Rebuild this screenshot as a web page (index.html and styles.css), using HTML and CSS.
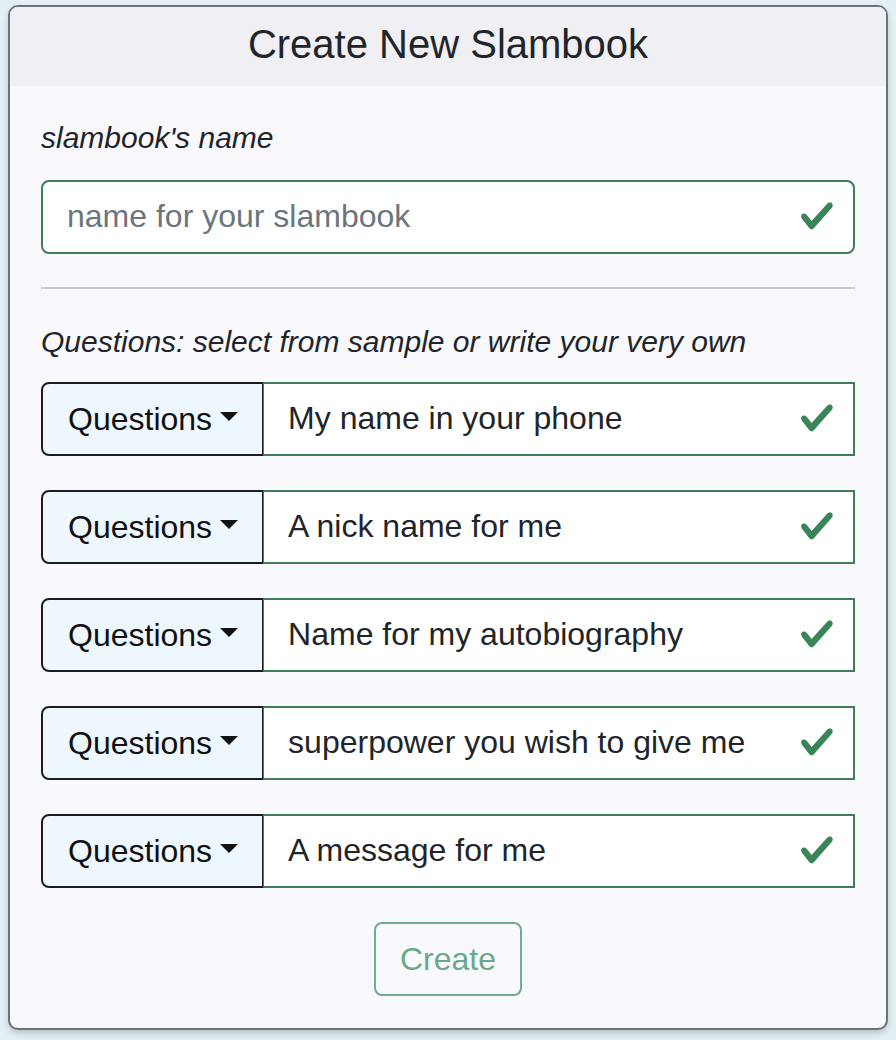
FILE: index.html
```html
<!DOCTYPE html>
<html lang="en">
<head>
<meta charset="utf-8">
<title>Create New Slambook</title>
<link rel="stylesheet" href="styles.css">
</head>
<body>
<div class="card">
  <div class="card-header">Create New Slambook</div>
  <div class="card-body">
    <div class="label">slambook's name</div>
    <div class="field rounded">
      <input class="control" type="text" placeholder="name for your slambook">
      <svg class="check" viewBox="0 0 8 8" width="36" height="36"><path fill="#3a8557" d="M2.3 6.73.6 4.53c-.4-1.04.46-1.4 1.1-.8l1.1 1.4 3.4-3.8c.6-.63 1.6-.27 1.2.7l-4 4.6c-.43.5-.8.4-1.1.1z"/></svg>
    </div>
    <hr class="divider">
    <div class="label label-q">Questions: select from sample or write your very own</div>
    <div class="rows">
      <div class="row">
        <button class="drop" type="button">Questions</button>
        <div class="field">
          <input class="control" type="text" value="My name in your phone">
          <svg class="check" viewBox="0 0 8 8" width="36" height="36"><path fill="#3a8557" d="M2.3 6.73.6 4.53c-.4-1.04.46-1.4 1.1-.8l1.1 1.4 3.4-3.8c.6-.63 1.6-.27 1.2.7l-4 4.6c-.43.5-.8.4-1.1.1z"/></svg>
        </div>
      </div>
      <div class="row">
        <button class="drop" type="button">Questions</button>
        <div class="field">
          <input class="control" type="text" value="A nick name for me">
          <svg class="check" viewBox="0 0 8 8" width="36" height="36"><path fill="#3a8557" d="M2.3 6.73.6 4.53c-.4-1.04.46-1.4 1.1-.8l1.1 1.4 3.4-3.8c.6-.63 1.6-.27 1.2.7l-4 4.6c-.43.5-.8.4-1.1.1z"/></svg>
        </div>
      </div>
      <div class="row">
        <button class="drop" type="button">Questions</button>
        <div class="field">
          <input class="control" type="text" value="Name for my autobiography">
          <svg class="check" viewBox="0 0 8 8" width="36" height="36"><path fill="#3a8557" d="M2.3 6.73.6 4.53c-.4-1.04.46-1.4 1.1-.8l1.1 1.4 3.4-3.8c.6-.63 1.6-.27 1.2.7l-4 4.6c-.43.5-.8.4-1.1.1z"/></svg>
        </div>
      </div>
      <div class="row">
        <button class="drop" type="button">Questions</button>
        <div class="field">
          <input class="control" type="text" value="superpower you wish to give me">
          <svg class="check" viewBox="0 0 8 8" width="36" height="36"><path fill="#3a8557" d="M2.3 6.73.6 4.53c-.4-1.04.46-1.4 1.1-.8l1.1 1.4 3.4-3.8c.6-.63 1.6-.27 1.2.7l-4 4.6c-.43.5-.8.4-1.1.1z"/></svg>
        </div>
      </div>
      <div class="row">
        <button class="drop" type="button">Questions</button>
        <div class="field">
          <input class="control" type="text" value="A message for me">
          <svg class="check" viewBox="0 0 8 8" width="36" height="36"><path fill="#3a8557" d="M2.3 6.73.6 4.53c-.4-1.04.46-1.4 1.1-.8l1.1 1.4 3.4-3.8c.6-.63 1.6-.27 1.2.7l-4 4.6c-.43.5-.8.4-1.1.1z"/></svg>
        </div>
      </div>
    </div>
    <div class="actions">
      <button class="create" type="button" disabled>Create</button>
    </div>
  </div>
</div>
</body>
</html>
```
FILE: styles.css
```css
* { box-sizing: border-box; }
html, body { height: 100%; }
body {
  margin: 0;
  padding: 5px 8px;
  background: #e4f1f4;
  font-family: "Liberation Sans", Arial, Helvetica, sans-serif;
  color: #212529;
}
.card {
  border: 2px solid #6e7277;
  border-radius: 10px;
  background: #f8f8fd;
  box-shadow: 0 4px 6px rgba(0, 0, 0, 0.18);
  overflow: hidden;
}
.card-header {
  height: 79px;
  padding-bottom: 4px;
  background: #efeff4;
  display: flex;
  align-items: center;
  justify-content: center;
  font-size: 40px;
  color: #212529;
}
.card-body {
  padding: 29px 31px 32px;
}
.label {
  font-style: italic;
  font-size: 30px;
  line-height: 45px;
  margin-bottom: 20px;
}
.label-q {
  margin-top: 30px;
  margin-bottom: 18px;
}
.field {
  position: relative;
  flex: 1;
  height: 74px;
  border: 2px solid #3f7e58;
  background: #fff;
}
.field.rounded {
  border-radius: 8px;
}
.control {
  width: 100%;
  height: 100%;
  border: 0;
  outline: none;
  background: transparent;
  font-family: inherit;
  font-size: 32px;
  color: #212529;
  padding: 0 70px 2px 24px;
}
.control::placeholder {
  color: #6c757d;
}
.check {
  position: absolute;
  right: 18px;
  top: 50%;
  margin-top: -19px;
}
.divider {
  margin: 33px 0 0;
  border: 0;
  border-top: 2px solid #c9c9ce;
}
.rows {
  display: flex;
  flex-direction: column;
  gap: 34px;
}
.row {
  display: flex;
  height: 74px;
}
.drop {
  display: flex;
  align-items: center;
  height: 74px;
  padding: 0 24px 0 25px;
  border: 2px solid #1b1e21;
  border-right-width: 1px;
  border-radius: 8px 0 0 8px;
  background: #eef6fe;
  font-family: inherit;
  font-size: 32px;
  color: #111;
}
.drop::after {
  content: "";
  display: inline-block;
  margin-left: 8px;
  margin-top: -6px;
  border-top: 9.6px solid #111;
  border-left: 9.6px solid transparent;
  border-right: 9.6px solid transparent;
}
.row .field {
  border-left-width: 1px;
}
.actions {
  display: flex;
  justify-content: center;
  margin-top: 34px;
}
.create {
  height: 74px;
  padding: 0 24px;
  border: 2px solid #72ad90;
  border-radius: 8px;
  background: transparent;
  font-family: inherit;
  font-size: 32px;
  color: #6aa98a;
}
```
